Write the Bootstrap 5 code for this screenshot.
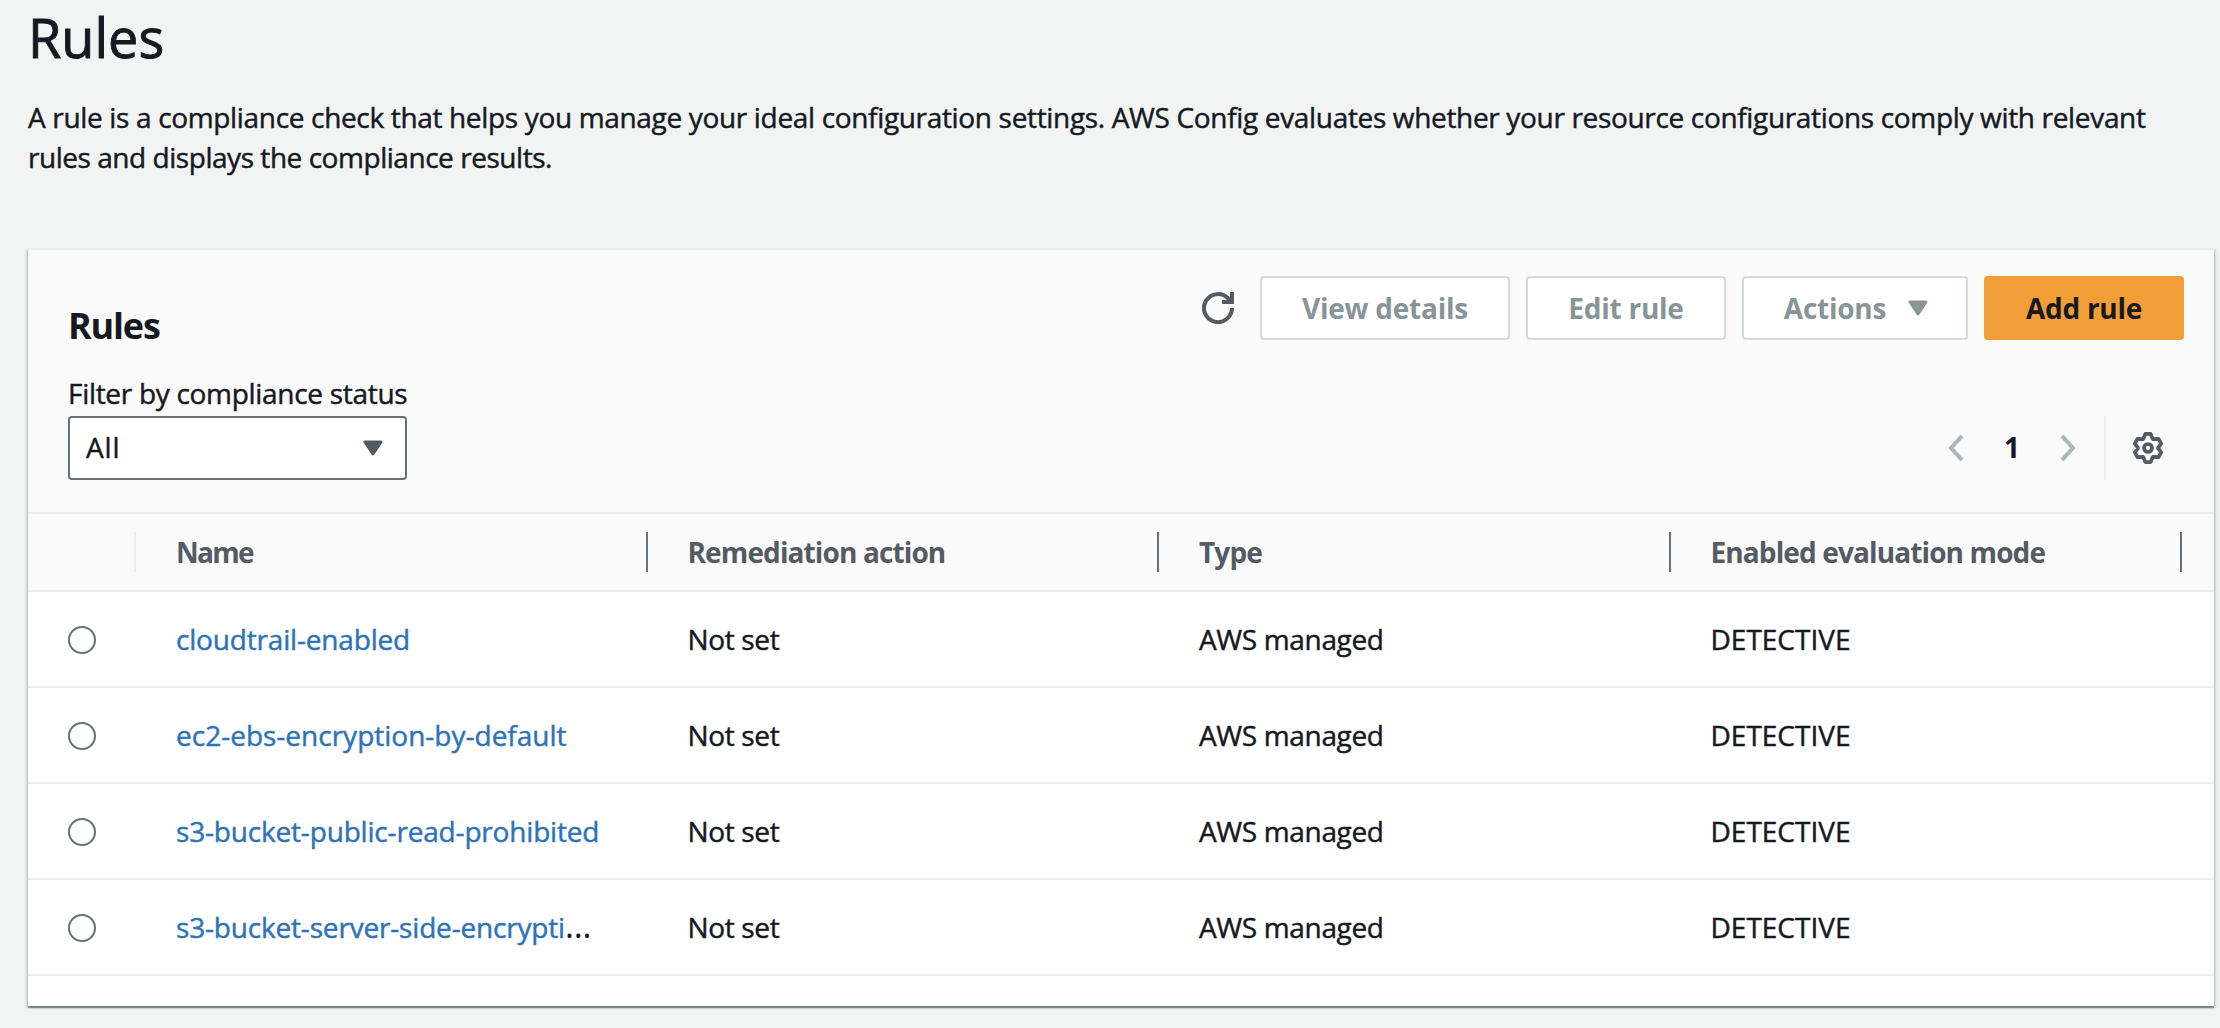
<!DOCTYPE html>
<html lang="en">
<head>
<meta charset="utf-8">
<meta name="viewport" content="width=device-width, initial-scale=1">
<title>Rules</title>
<link href="https://cdn.jsdelivr.net/npm/bootstrap@5.3.0/dist/css/bootstrap.min.css" rel="stylesheet">
<script src="https://cdn.jsdelivr.net/npm/bootstrap@5.3.0/dist/js/bootstrap.bundle.min.js" defer></script>
<style>
body{background:#f2f4f4;color:#16191f;font-family:"Open Sans","Noto Sans",sans-serif;font-size:28px;line-height:40px;-webkit-text-stroke:.45px currentColor}
.page{padding:0 6px 0 28px}
.page-title{font-size:54px;font-weight:400;line-height:60px;padding-top:7px;margin:0 0 30px;-webkit-text-stroke-width:.9px}
.intro{height:80px;margin-bottom:71px}
.ln1{letter-spacing:-.335px}
.ln2{letter-spacing:-.46px}
.panel{border-top:2px solid #eaeded;background:#fff;box-shadow:0 2px 1px 0 rgba(0,28,36,.35),2px 2px 2px 0 rgba(0,28,36,.16),-2px 2px 2px 0 rgba(0,28,36,.16);height:758px}
.panel-head{background:#fafafa;height:264px;padding:26px 30px 0 40px;border-bottom:2px solid #eaeded}
.head-top{height:96px}
.panel-title{font-size:36px;font-weight:700;letter-spacing:-1.2px;line-height:40px;margin:30px 0 0}
.panel-title,.act,.grid th,.pg,.more{-webkit-text-stroke-width:0}
.act{height:64px;border:2px solid #d5dbdb;border-radius:4px;background:#fff;color:#879596;font-size:28px;font-weight:700;line-height:40px;padding:0;letter-spacing:-.25px}
.act:disabled{opacity:1;background:#fff;border-color:#d5dbdb;color:#879596}
.act-view{width:250px}
.act-edit{width:200px}
.act-menu{width:226px;gap:22px;padding-left:2px}
.act-add{width:200px;background:#f19e38;border-color:#f19e38;color:#16191f}
.refresh{width:32px;height:32px;margin:16px 10px 0 0}
.lbl{letter-spacing:-.3px;height:44px;padding-top:1px}
.pick{width:339px;height:64px;border:2px solid #687078;border-radius:4px;background:#fff;padding:0 22px 0 16px;letter-spacing:.9px}
.pick span{padding-bottom:2px}
.pager{padding-right:20px}
.pg{width:16px;margin:0 40px;font-weight:700;text-align:center;padding-bottom:2px}
.pager-rule{width:2px;height:64px;background:#eaeded;margin:0 26px 0 28px}
.grid{table-layout:fixed;width:2186px;border-collapse:separate;border-spacing:0}
.grid th,.grid td{padding:0;border-bottom:2px solid #eaeded;white-space:nowrap;vertical-align:middle}
.grid th{background:#fafafa;height:78px;color:#545b64;font-weight:700;letter-spacing:-.88px}
.grid td{height:96px;padding-left:40px;letter-spacing:-.35px}
.grid .col-pick{width:108px}
.grid .col-data{width:511.5px}
.hd{height:40px;padding-left:40px;border-right:2px solid #687078;line-height:40px}
.hd.pale{border-color:#eaeded}
.hd.tight{letter-spacing:-1.7px}
.dot{display:block;width:28px;height:28px;border:2px solid #687078;border-radius:50%;background:#fff;margin-top:2px}
.grid a{color:#2e73b8;text-decoration:none;letter-spacing:-.18px}
.grid a.wide{letter-spacing:0}
.grid .det{letter-spacing:0}
.more{font-size:34px;line-height:30px;letter-spacing:0}
</style>
</head>
<body class="min-vh-100 overflow-hidden">
<main class="page">
  <h1 class="page-title">Rules</h1>
  <p class="intro text-nowrap"><span class="ln1">A rule is a compliance check that helps you manage your ideal configuration settings. AWS Config evaluates whether your resource configurations comply with relevant</span><br><span class="ln2">rules and displays the compliance results.</span></p>
  <section class="panel">
    <div class="panel-head">
      <div class="head-top d-flex justify-content-between align-items-start">
        <h2 class="panel-title">Rules</h2>
        <div class="d-flex gap-3">
          <svg class="refresh" viewBox="0 0 32 32" fill="none" stroke="#545b64" stroke-width="4"><path d="M30 16A14 14 0 1 1 26.2 6.5L29 9.5M30 0V10H20"/></svg>
          <button class="btn act act-view" disabled>View details</button>
          <button class="btn act act-edit" disabled>Edit rule</button>
          <button class="btn act act-menu d-flex align-items-center justify-content-center" disabled>Actions<svg width="20" height="16" viewBox="0 0 20 16"><path d="M2 2H18L10 14Z" fill="#879596" stroke="#879596" stroke-width="3" stroke-linejoin="round"/></svg></button>
          <button class="btn act act-add">Add rule</button>
        </div>
      </div>
      <div class="d-flex justify-content-between align-items-end">
        <div>
          <div class="lbl">Filter by compliance status</div>
          <div class="pick d-flex align-items-center justify-content-between"><span>All</span><svg width="20" height="16" viewBox="0 0 20 16"><path d="M2 2H18L10 14Z" fill="#545b64" stroke="#545b64" stroke-width="3" stroke-linejoin="round"/></svg></div>
        </div>
        <div class="pager d-flex align-items-center">
          <svg width="16" height="28" viewBox="0 0 16 28" fill="none" stroke="#aab7b8" stroke-width="4"><path d="M14 2L3 14L14 26"/></svg>
          <span class="pg">1</span>
          <svg width="16" height="28" viewBox="0 0 16 28" fill="none" stroke="#aab7b8" stroke-width="4"><path d="M2 2L13 14L2 26"/></svg>
          <span class="pager-rule"></span>
          <svg width="32" height="32" viewBox="0 0 32 32" fill="none" stroke="#545b64" stroke-width="3.7" stroke-linejoin="round"><circle cx="16" cy="16" r="4"/><path d="M13.4 1.9H18.6L20.9 7.2L26.4 6.8L29.2 11.6L25.9 16L29.2 20.4L26.4 25.2L20.9 24.8L18.6 30.1H13.4L11.1 24.8L5.6 25.2L2.8 20.4L6.1 16L2.8 11.6L5.6 6.8L11.1 7.2Z"/></svg>
        </div>
      </div>
    </div>
    <table class="grid">
      <colgroup><col class="col-pick"><col class="col-data"><col class="col-data"><col class="col-data"><col class="col-data"><col></colgroup>
      <thead>
        <tr><th><div class="hd pale"></div></th><th><div class="hd tight">Name</div></th><th><div class="hd">Remediation action</div></th><th><div class="hd">Type</div></th><th><div class="hd">Enabled evaluation mode</div></th><th></th></tr>
      </thead>
      <tbody>
        <tr><td><span class="dot"></span></td><td><a href="#">cloudtrail-enabled</a></td><td>Not set</td><td>AWS managed</td><td class="det">DETECTIVE</td><td></td></tr>
        <tr><td><span class="dot"></span></td><td><a href="#" class="wide">ec2-ebs-encryption-by-default</a></td><td>Not set</td><td>AWS managed</td><td class="det">DETECTIVE</td><td></td></tr>
        <tr><td><span class="dot"></span></td><td><a href="#">s3-bucket-public-read-prohibited</a></td><td>Not set</td><td>AWS managed</td><td class="det">DETECTIVE</td><td></td></tr>
        <tr><td><span class="dot"></span></td><td><a href="#">s3-bucket-server-side-encrypti</a><span class="more">…</span></td><td>Not set</td><td>AWS managed</td><td class="det">DETECTIVE</td><td></td></tr>
      </tbody>
    </table>
  </section>
</main>
</body>
</html>
